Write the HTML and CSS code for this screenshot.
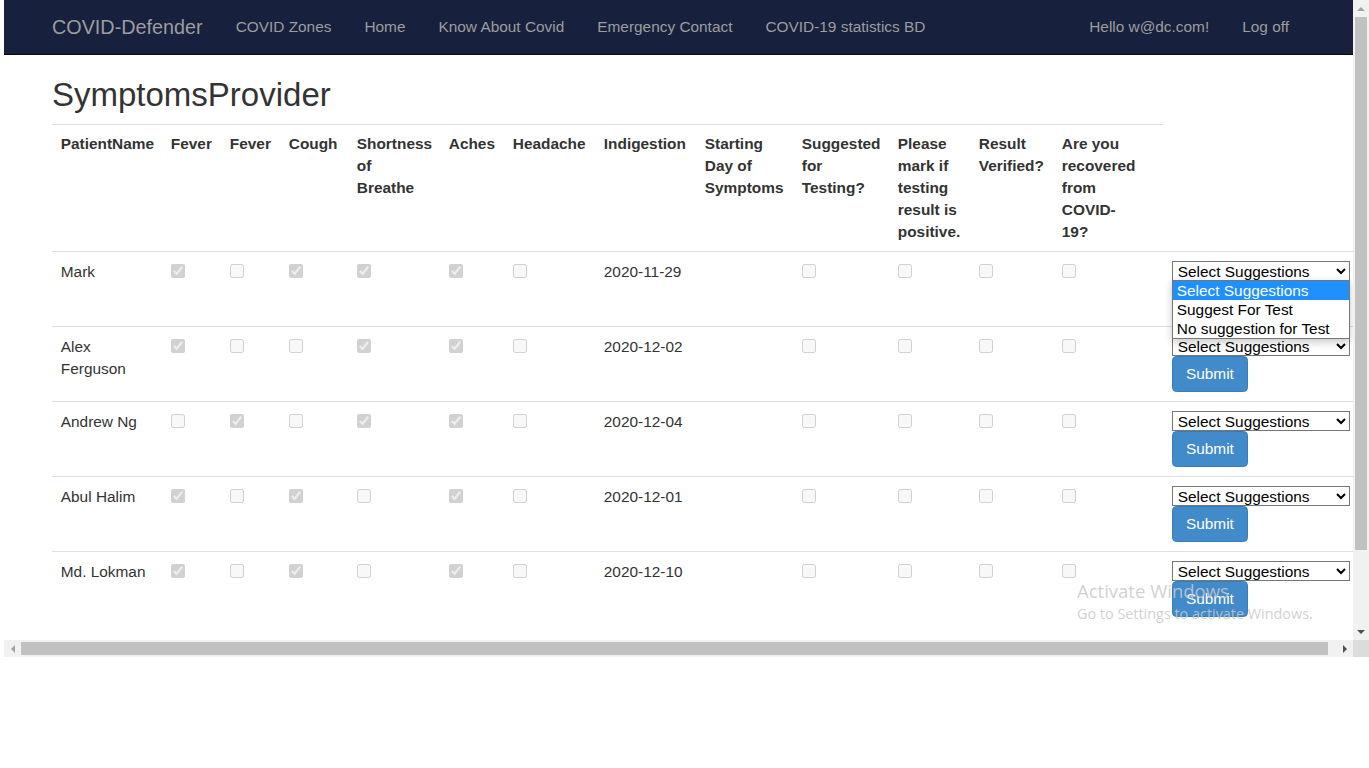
FILE: index.html
```html
<!DOCTYPE html>
<html lang="en">
<head>
<meta charset="utf-8">
<title>SymptomsProvider - COVID-Defender</title>
<link rel="stylesheet" href="styles.css">
</head>
<body>
<div class="screen">
  <div class="browser">
    <div class="viewport">
      <div class="page">
        <nav class="navbar">
          <a class="brand" href="#">COVID-Defender</a>
          <ul class="nav">
            <li><a href="#">COVID Zones</a></li>
            <li><a href="#">Home</a></li>
            <li><a href="#">Know About Covid</a></li>
            <li><a href="#">Emergency Contact</a></li>
            <li><a href="#">COVID-19 statistics BD</a></li>
          </ul>
          <ul class="nav nav-right">
            <li><a href="#">Hello w@dc.com!</a></li>
            <li><a href="#">Log off</a></li>
          </ul>
        </nav>
        <main class="content">
          <h2 class="title">SymptomsProvider</h2>
          <table class="table">
            <colgroup>
              <col class="w110"><col class="w59"><col class="w59"><col class="w68"><col class="w92"><col class="w64"><col class="w91"><col class="w101"><col class="w97"><col class="w96"><col class="w81"><col class="w83"><col class="w110"><col class="w196">
            </colgroup>
            <tr>
              <th>PatientName</th>
              <th>Fever</th>
              <th>Fever</th>
              <th>Cough</th>
              <th>Shortness of Breathe</th>
              <th>Aches</th>
              <th>Headache</th>
              <th>Indigestion</th>
              <th>Starting Day of Symptoms</th>
              <th>Suggested for Testing?</th>
              <th>Please mark if testing result is positive.</th>
              <th>Result Verified?</th>
              <th class="th-narrow">Are you recovered from COVID-19?</th>
            </tr>
            <tr>
              <td>Mark</td>
              <td><input type="checkbox" checked disabled></td>
              <td><input type="checkbox" disabled></td>
              <td><input type="checkbox" checked disabled></td>
              <td><input type="checkbox" checked disabled></td>
              <td><input type="checkbox" checked disabled></td>
              <td><input type="checkbox" disabled></td>
              <td>2020-11-29</td>
              <td></td>
              <td><input type="checkbox" disabled></td>
              <td><input type="checkbox" disabled></td>
              <td><input type="checkbox" disabled></td>
              <td><input type="checkbox" disabled></td>
              <td>
                <div class="action">
                  <select class="suggest"><option>Select Suggestions</option><option>Suggest For Test</option><option>No suggestion for Test</option></select>
                  <button class="btn" type="button">Submit</button>
                  <ul class="dropdown">
                    <li class="active">Select Suggestions</li>
                    <li>Suggest For Test</li>
                    <li>No suggestion for Test</li>
                  </ul>
                </div>
              </td>
            </tr>
            <tr>
              <td>Alex Ferguson</td>
              <td><input type="checkbox" checked disabled></td>
              <td><input type="checkbox" disabled></td>
              <td><input type="checkbox" disabled></td>
              <td><input type="checkbox" checked disabled></td>
              <td><input type="checkbox" checked disabled></td>
              <td><input type="checkbox" disabled></td>
              <td>2020-12-02</td>
              <td></td>
              <td><input type="checkbox" disabled></td>
              <td><input type="checkbox" disabled></td>
              <td><input type="checkbox" disabled></td>
              <td><input type="checkbox" disabled></td>
              <td>
                <div class="action">
                  <select class="suggest"><option>Select Suggestions</option><option>Suggest For Test</option><option>No suggestion for Test</option></select>
                  <button class="btn" type="button">Submit</button>
                </div>
              </td>
            </tr>
            <tr>
              <td>Andrew Ng</td>
              <td><input type="checkbox" disabled></td>
              <td><input type="checkbox" checked disabled></td>
              <td><input type="checkbox" disabled></td>
              <td><input type="checkbox" checked disabled></td>
              <td><input type="checkbox" checked disabled></td>
              <td><input type="checkbox" disabled></td>
              <td>2020-12-04</td>
              <td></td>
              <td><input type="checkbox" disabled></td>
              <td><input type="checkbox" disabled></td>
              <td><input type="checkbox" disabled></td>
              <td><input type="checkbox" disabled></td>
              <td>
                <div class="action">
                  <select class="suggest"><option>Select Suggestions</option><option>Suggest For Test</option><option>No suggestion for Test</option></select>
                  <button class="btn" type="button">Submit</button>
                </div>
              </td>
            </tr>
            <tr>
              <td>Abul Halim</td>
              <td><input type="checkbox" checked disabled></td>
              <td><input type="checkbox" disabled></td>
              <td><input type="checkbox" checked disabled></td>
              <td><input type="checkbox" disabled></td>
              <td><input type="checkbox" checked disabled></td>
              <td><input type="checkbox" disabled></td>
              <td>2020-12-01</td>
              <td></td>
              <td><input type="checkbox" disabled></td>
              <td><input type="checkbox" disabled></td>
              <td><input type="checkbox" disabled></td>
              <td><input type="checkbox" disabled></td>
              <td>
                <div class="action">
                  <select class="suggest"><option>Select Suggestions</option><option>Suggest For Test</option><option>No suggestion for Test</option></select>
                  <button class="btn" type="button">Submit</button>
                </div>
              </td>
            </tr>
            <tr>
              <td>Md. Lokman</td>
              <td><input type="checkbox" checked disabled></td>
              <td><input type="checkbox" disabled></td>
              <td><input type="checkbox" checked disabled></td>
              <td><input type="checkbox" disabled></td>
              <td><input type="checkbox" checked disabled></td>
              <td><input type="checkbox" disabled></td>
              <td>2020-12-10</td>
              <td></td>
              <td><input type="checkbox" disabled></td>
              <td><input type="checkbox" disabled></td>
              <td><input type="checkbox" disabled></td>
              <td><input type="checkbox" disabled></td>
              <td>
                <div class="action">
                  <select class="suggest"><option>Select Suggestions</option><option>Suggest For Test</option><option>No suggestion for Test</option></select>
                  <button class="btn" type="button">Submit</button>
                </div>
              </td>
            </tr>
          </table>
        </main>
      </div>
    </div>
    <div class="vscroll">
      <div class="arrow-box"><span class="tri tri-up"></span></div>
      <div class="vtrack"><div class="vthumb"></div></div>
      <div class="arrow-box"><span class="tri tri-down"></span></div>
    </div>
    <div class="hscroll">
      <div class="arrow-box-h"><span class="tri tri-left"></span></div>
      <div class="htrack"><div class="hthumb"></div></div>
      <div class="arrow-box-h"><span class="tri tri-right"></span></div>
    </div>
    <div class="corner"></div>
  </div>
  <div class="watermark">
    <div class="wm-title">Activate Windows</div>
    <div class="wm-sub">Go to Settings to activate Windows.</div>
  </div>
</div>
</body>
</html>
```

FILE: styles.css
```css
html, body {
  margin: 0;
  padding: 0;
  background: #fff;
}

body {
  font-family: "Liberation Sans", Arial, Helvetica, sans-serif;
  font-size: 15.4px;
  line-height: 22px;
  color: #333;
}

.screen {
  position: relative;
  width: 1369px;
  height: 768px;
  padding-left: 4px;
  box-sizing: border-box;
}

.browser {
  display: grid;
  grid-template-columns: 1349px 16px;
  grid-template-rows: 640px 17px;
}

.viewport {
  overflow: hidden;
  background: #fff;
}

.page {
  width: 1400px;
}

/* Navbar */
.navbar {
  display: flex;
  align-items: center;
  width: 1349px;
  height: 55px;
  padding: 0 47.5px 0 48px;
  box-sizing: border-box;
  background: #17203d;
  border-bottom: 1px solid #080808;
}

.brand {
  color: #9d9d9d;
  font-size: 19.8px;
  line-height: 22px;
  text-decoration: none;
  padding-right: 16.5px;
}

.nav {
  display: flex;
  list-style: none;
  margin: 0;
  padding: 0;
}

.nav a {
  display: block;
  padding: 0 16.5px;
  color: #9d9d9d;
  text-decoration: none;
  line-height: 22px;
}

.nav-right {
  margin-left: auto;
}

/* Content */
.content {
  padding-left: 48px;
}

.title {
  margin: 22px 0 11px;
  font-size: 33px;
  line-height: 36.3px;
  font-weight: 500;
  color: #333;
}

.table {
  width: 1307px;
  table-layout: fixed;
  border-collapse: collapse;
  border-spacing: 0;
}

.w59 { width: 59px; }
.w64 { width: 64px; }
.w68 { width: 68px; }
.w81 { width: 81px; }
.w83 { width: 83px; }
.w91 { width: 91px; }
.w92 { width: 92px; }
.w96 { width: 96px; }
.w97 { width: 97px; }
.w101 { width: 101px; }
.w110 { width: 110px; }
.w196 { width: 196px; }

.table th {
  text-align: left;
  vertical-align: top;
  font-weight: bold;
  padding: 8px 8.8px;
  border-top: 1px solid #ddd;
  line-height: 22px;
}

.table th.th-narrow {
  padding-right: 26px;
}

.table td {
  vertical-align: top;
  padding: 9px 8.8px;
  border-top: 1px solid #ddd;
  line-height: 22px;
}

.table input[type="checkbox"] {
  display: block;
  width: 14px;
  height: 14px;
  margin: 3px 0 0;
}

.action {
  position: relative;
  width: 178px;
}

.suggest {
  display: block;
  width: 178px;
  height: 20px;
  margin: 0;
  padding: 0 0 0 1px;
  font-family: "Liberation Sans", Arial, sans-serif;
  font-size: 15.4px;
  color: #000;
  background: #fff;
  border: 1px solid #767676;
  border-radius: 0;
  box-sizing: border-box;
}

.btn {
  display: block;
  margin: 0;
  padding: 6px 13.2px;
  height: 36px;
  font-family: "Liberation Sans", Arial, sans-serif;
  font-size: 15.4px;
  line-height: 22px;
  color: #fff;
  background: #428bca;
  border: 1px solid #357ebd;
  border-radius: 4.4px;
  box-sizing: border-box;
}

.dropdown {
  position: absolute;
  top: 19px;
  left: 0;
  width: 178px;
  margin: 0;
  padding: 0;
  list-style: none;
  background: #fff;
  border: 1px solid #767676;
  box-sizing: border-box;
  box-shadow: 0 3px 8px rgba(0, 0, 0, 0.22);
  z-index: 5;
}

.dropdown li {
  height: 19px;
  line-height: 19px;
  padding-left: 4px;
  font-size: 15.4px;
  color: #000;
  white-space: nowrap;
}

.dropdown li.active {
  background: #1e90ff;
  color: #fff;
}

/* Scrollbars */
.vscroll {
  display: flex;
  flex-direction: column;
  background: #f1f1f1;
}

.arrow-box {
  height: 17px;
  display: flex;
  align-items: center;
  justify-content: center;
}

.vtrack {
  flex: 1;
  padding: 0 2px;
}

.vthumb {
  height: 533px;
  background: #c1c1c1;
}

.hscroll {
  display: flex;
  background: #f1f1f1;
}

.arrow-box-h {
  width: 17px;
  display: flex;
  align-items: center;
  justify-content: center;
}

.htrack {
  flex: 1;
  padding: 2px 0;
}

.hthumb {
  width: 1307px;
  height: 13px;
  background: #c1c1c1;
}

.corner {
  background: #dcdcdc;
}

.tri {
  display: block;
  width: 0;
  height: 0;
  border-style: solid;
}

.tri-up {
  border-width: 0 4px 4px 4px;
  border-color: transparent transparent #a3a3a3 transparent;
}

.tri-down {
  border-width: 4px 4px 0 4px;
  border-color: #505050 transparent transparent transparent;
}

.tri-left {
  border-width: 4px 4px 4px 0;
  border-color: transparent #a3a3a3 transparent transparent;
}

.tri-right {
  border-width: 4px 0 4px 4px;
  border-color: transparent transparent transparent #505050;
}

/* Activation watermark */
.watermark {
  position: absolute;
  left: 1077px;
  top: 578px;
  z-index: 10;
  font-family: "Open Sans", "Noto Sans", sans-serif;
  color: rgba(200, 200, 200, 0.85);
  pointer-events: none;
}

.wm-title {
  font-size: 18.5px;
  line-height: 26px;
}

.wm-sub {
  font-size: 14.4px;
  line-height: 20px;
}
```
